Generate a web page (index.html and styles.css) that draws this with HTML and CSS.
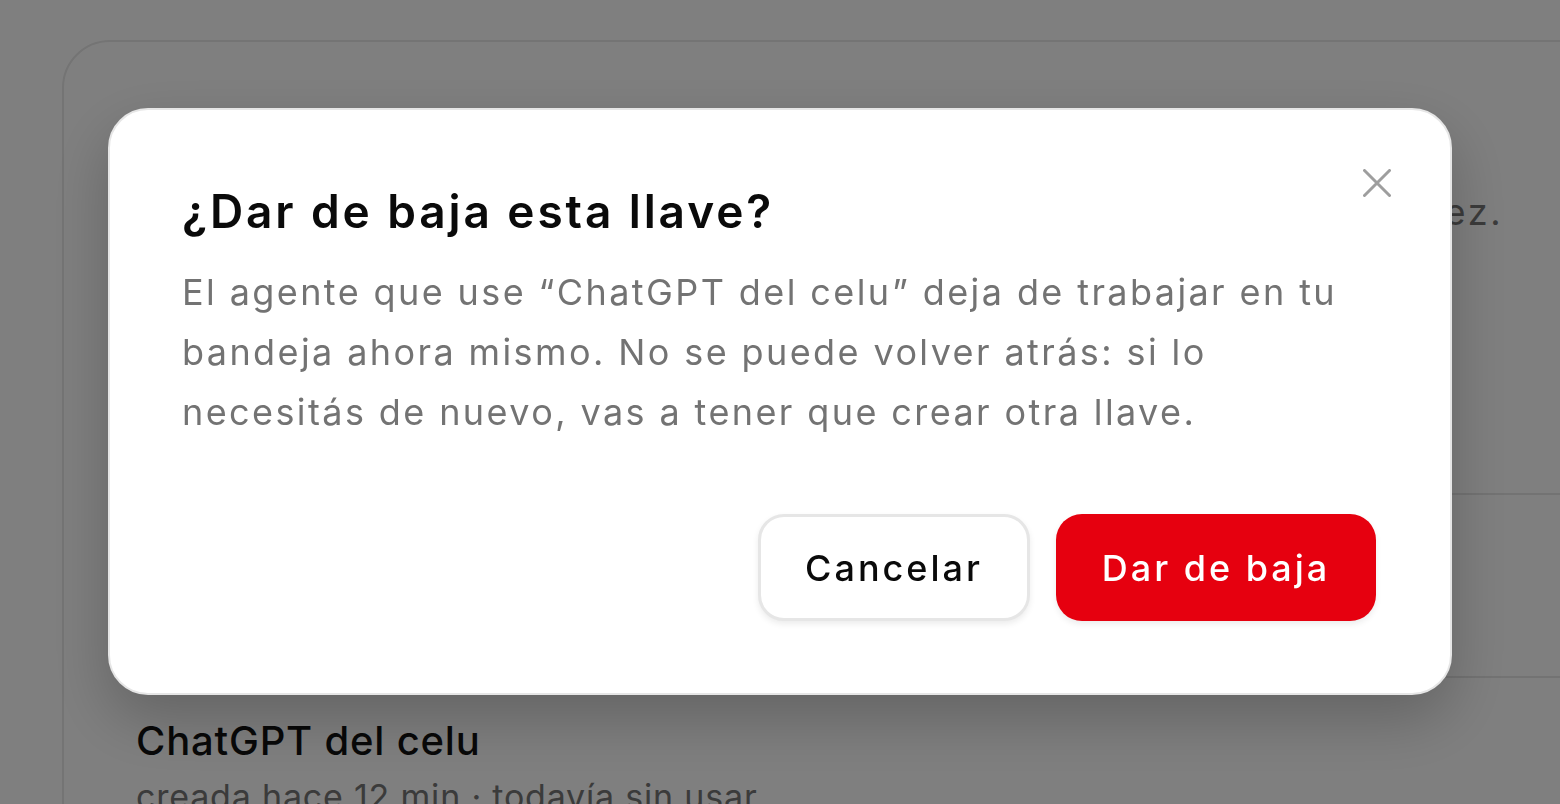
FILE: index.html
```html
<!DOCTYPE html>
<html lang="es">
<head>
<meta charset="utf-8">
<title>Llaves</title>
<link rel="stylesheet" href="styles.css">
</head>
<body>
<main class="page">
  <section class="card">
    <header class="card-head">
      <h2 class="card-title">Llaves de agentes</h2>
      <p class="card-desc">Cada llave conecta un agente a tu bandeja. La vas a ver una sola vez.</p>
    </header>
    <ul class="key-list">
      <li class="key-row">
        <div class="key-name">Claude de la compu</div>
        <div class="key-meta">creada hace 3 días · usada hace 1 hora</div>
      </li>
      <li class="key-row">
        <div class="key-name">ChatGPT del celu</div>
        <div class="key-meta">creada hace 12 min · todavía sin usar</div>
      </li>
    </ul>
  </section>
</main>

<div class="overlay">
  <div class="modal" role="dialog" aria-labelledby="modal-title">
    <button class="close" aria-label="Cerrar">
      <svg viewBox="0 0 28 28" width="28" height="28"><path d="M1.5 1.5 L26.5 26.5 M26.5 1.5 L1.5 26.5" stroke="currentColor" stroke-width="3" stroke-linecap="round" fill="none"/></svg>
    </button>
    <h1 id="modal-title" class="modal-title">¿Dar de baja esta llave?</h1>
    <p class="modal-text">El agente que use “ChatGPT del celu” deja de trabajar en tu bandeja ahora mismo. No se puede volver atrás: si lo necesitás de nuevo, vas a tener que crear otra llave.</p>
    <div class="actions">
      <button class="btn btn-secondary">Cancelar</button>
      <button class="btn btn-danger">Dar de baja</button>
    </div>
  </div>
</div>
</body>
</html>
```

FILE: styles.css
```css
* { box-sizing: border-box; }

html, body {
  margin: 0;
  padding: 0;
  width: 1560px;
  height: 804px;
  overflow: hidden;
  background: #ffffff;
  font-family: Inter, "Noto Sans", sans-serif;
}

.page {
  padding: 40px 0 0 62px;
}

.card {
  width: 1600px;
  height: 900px;
  border: 2px solid #e8e8e8;
  border-radius: 48px;
  background: #ffffff;
}

.card-head {
  height: 451px;
  padding: 72px 0 0 72px;
}

.card-title {
  margin: 0;
  font-size: 40px;
  font-weight: 600;
  line-height: 50px;
  color: #111;
  letter-spacing: 2px;
}

.card-desc {
  margin: 18px 0 0;
  font-size: 36px;
  line-height: 60px;
  color: #777;
  letter-spacing: 2.7px;
  white-space: nowrap;
}

.key-list {
  list-style: none;
  margin: 0;
  padding: 0;
}

.key-row {
  margin-left: 72px;
  height: 183px;
  border-top: 2px solid #e6e6e6;
  padding-top: 38px;
}

.key-name {
  font-size: 40px;
  font-weight: 500;
  line-height: 50px;
  color: #111;
  letter-spacing: 0.8px;
}

.key-meta {
  margin-top: 9px;
  font-size: 34px;
  line-height: 44px;
  color: #777;
  letter-spacing: 0.8px;
}

.overlay {
  position: fixed;
  inset: 0;
  background: rgba(0, 0, 0, 0.5);
  display: flex;
  justify-content: center;
  align-items: flex-start;
  padding-top: 108px;
}

.modal {
  position: relative;
  width: 1344px;
  height: 587px;
  background: #ffffff;
  border: 2px solid #e6e6e6;
  border-radius: 40px;
  padding: 72px 74px 72px 72px;
  box-shadow: 0 24px 60px rgba(0, 0, 0, 0.22);
  display: flex;
  flex-direction: column;
}

.close {
  position: absolute;
  top: 49px;
  right: 49px;
  width: 48px;
  height: 48px;
  padding: 0;
  border: 0;
  background: transparent;
  color: #9e9e9e;
  display: flex;
  align-items: center;
  justify-content: center;
}

.modal-title {
  margin: 1px 0 0;
  font-size: 46px;
  font-weight: 600;
  line-height: 56px;
  color: #0a0a0a;
  letter-spacing: 2.9px;
}

.modal-text {
  margin: 23px 0 0;
  max-width: 1185px;
  font-size: 36px;
  line-height: 60px;
  color: #737373;
  letter-spacing: 2.4px;
}

.actions {
  margin-top: auto;
  display: flex;
  justify-content: flex-end;
  gap: 26px;
}

.btn {
  height: 107px;
  padding: 0 40px;
  border-radius: 26px;
  font-family: inherit;
  font-size: 36px;
  font-weight: 500;
  letter-spacing: 3px;
  display: inline-flex;
  align-items: center;
  justify-content: center;
}

.btn-secondary {
  width: 272px;
  background: #ffffff;
  color: #0a0a0a;
  border: 3px solid #e6e6e6;
  box-shadow: 0 3px 6px rgba(0, 0, 0, 0.08);
}

.btn-danger {
  width: 320px;
  background: #e6000f;
  color: #ffffff;
  border: 0;
  box-shadow: 0 3px 6px rgba(0, 0, 0, 0.08);
}
```
